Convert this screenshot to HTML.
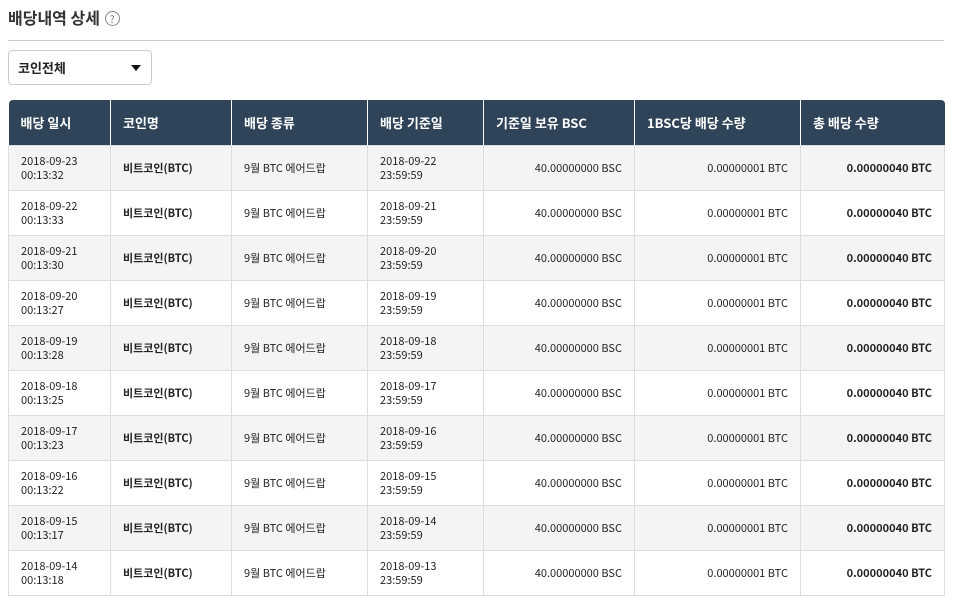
<!DOCTYPE html>
<html><head><meta charset="utf-8"><style>
body{margin:0;background:#fff;font-family:"Liberation Sans","Noto Sans CJK KR",sans-serif;color:#222;width:957px;height:605px;overflow:hidden;position:relative}
h1{position:absolute;left:8px;top:5px;margin:0;font-size:16px;font-weight:bold;color:#333;font-family:"Noto Sans CJK KR",sans-serif}
.q{display:inline-block;width:13px;height:13px;border:1px solid #888;border-radius:50%;font-size:10px;line-height:13px;text-align:center;color:#777;font-weight:normal;vertical-align:1px;margin-left:1px}
.hr{position:absolute;left:8px;top:40px;width:936px;height:1px;background:#ccc}
.sel{position:absolute;left:8px;top:50px;width:144px;height:35px;border:1px solid #ccc;border-radius:4px;box-sizing:border-box;font-size:13px;font-weight:bold;line-height:33px;padding-left:9px;font-family:"Noto Sans CJK KR",sans-serif}
.sel:after{content:"";position:absolute;right:10px;top:14px;border-left:5px solid transparent;border-right:5px solid transparent;border-top:6px solid #111}
table{position:absolute;left:8px;top:100px;width:936px;border-collapse:collapse;font-size:11px;font-family:"Noto Sans CJK KR",sans-serif;table-layout:fixed}
th{background:#2f4459;color:#fff;height:45px;text-align:left;padding:0 12px;font-size:13px;font-weight:bold;border-left:1px solid #fff;box-sizing:border-box}
th:first-child{border-left:none;border-top-left-radius:4px}
th:last-child{border-top-right-radius:4px}
td{height:45px;box-sizing:border-box;border:1px solid #ddd;padding:0 12px;line-height:14px}
tr:nth-child(odd) td{background:#f3f4f6}
.r{text-align:right}.b{font-weight:bold}
</style></head><body>
<h1>배당내역 상세 <span class="q">?</span></h1>
<div class="hr"></div>
<div class="sel">코인전체</div>
<table>
<colgroup><col style="width:102px"><col style="width:121px"><col style="width:136px"><col style="width:116px"><col style="width:151px"><col style="width:166px"><col style="width:144px"></colgroup>
<thead><tr><th>배당 일시</th><th>코인명</th><th>배당 종류</th><th>배당 기준일</th><th>기준일 보유 BSC</th><th>1BSC당 배당 수량</th><th>총 배당 수량</th></tr></thead>
<tbody>
<tr><td>2018-09-23<br>00:13:32</td><td class="b">비트코인(BTC)</td><td>9월 BTC 에어드랍</td><td>2018-09-22<br>23:59:59</td><td class="r">40.00000000 BSC</td><td class="r">0.00000001 BTC</td><td class="r b">0.00000040 BTC</td></tr>
<tr><td>2018-09-22<br>00:13:33</td><td class="b">비트코인(BTC)</td><td>9월 BTC 에어드랍</td><td>2018-09-21<br>23:59:59</td><td class="r">40.00000000 BSC</td><td class="r">0.00000001 BTC</td><td class="r b">0.00000040 BTC</td></tr>
<tr><td>2018-09-21<br>00:13:30</td><td class="b">비트코인(BTC)</td><td>9월 BTC 에어드랍</td><td>2018-09-20<br>23:59:59</td><td class="r">40.00000000 BSC</td><td class="r">0.00000001 BTC</td><td class="r b">0.00000040 BTC</td></tr>
<tr><td>2018-09-20<br>00:13:27</td><td class="b">비트코인(BTC)</td><td>9월 BTC 에어드랍</td><td>2018-09-19<br>23:59:59</td><td class="r">40.00000000 BSC</td><td class="r">0.00000001 BTC</td><td class="r b">0.00000040 BTC</td></tr>
<tr><td>2018-09-19<br>00:13:28</td><td class="b">비트코인(BTC)</td><td>9월 BTC 에어드랍</td><td>2018-09-18<br>23:59:59</td><td class="r">40.00000000 BSC</td><td class="r">0.00000001 BTC</td><td class="r b">0.00000040 BTC</td></tr>
<tr><td>2018-09-18<br>00:13:25</td><td class="b">비트코인(BTC)</td><td>9월 BTC 에어드랍</td><td>2018-09-17<br>23:59:59</td><td class="r">40.00000000 BSC</td><td class="r">0.00000001 BTC</td><td class="r b">0.00000040 BTC</td></tr>
<tr><td>2018-09-17<br>00:13:23</td><td class="b">비트코인(BTC)</td><td>9월 BTC 에어드랍</td><td>2018-09-16<br>23:59:59</td><td class="r">40.00000000 BSC</td><td class="r">0.00000001 BTC</td><td class="r b">0.00000040 BTC</td></tr>
<tr><td>2018-09-16<br>00:13:22</td><td class="b">비트코인(BTC)</td><td>9월 BTC 에어드랍</td><td>2018-09-15<br>23:59:59</td><td class="r">40.00000000 BSC</td><td class="r">0.00000001 BTC</td><td class="r b">0.00000040 BTC</td></tr>
<tr><td>2018-09-15<br>00:13:17</td><td class="b">비트코인(BTC)</td><td>9월 BTC 에어드랍</td><td>2018-09-14<br>23:59:59</td><td class="r">40.00000000 BSC</td><td class="r">0.00000001 BTC</td><td class="r b">0.00000040 BTC</td></tr>
<tr><td>2018-09-14<br>00:13:18</td><td class="b">비트코인(BTC)</td><td>9월 BTC 에어드랍</td><td>2018-09-13<br>23:59:59</td><td class="r">40.00000000 BSC</td><td class="r">0.00000001 BTC</td><td class="r b">0.00000040 BTC</td></tr>
</tbody></table>
</body></html>
